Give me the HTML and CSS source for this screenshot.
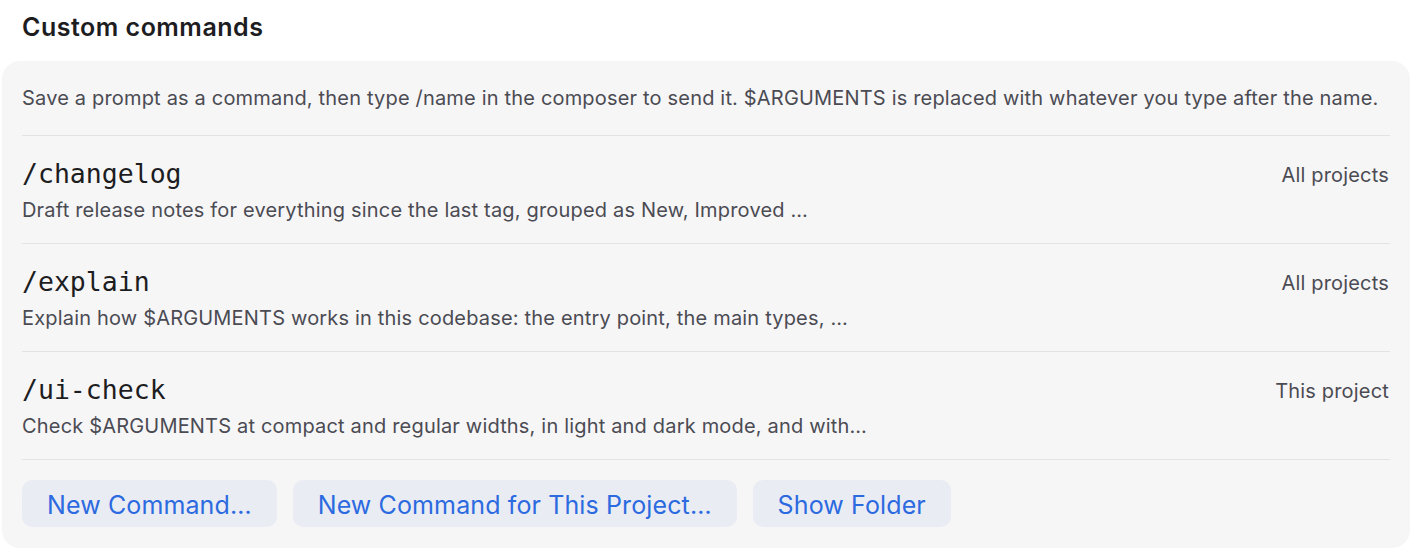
FILE: index.html
```html
<!DOCTYPE html>
<html lang="en">
<head>
<meta charset="utf-8">
<title>Custom commands</title>
<link rel="stylesheet" href="styles.css">
</head>
<body>
<div class="page">
  <h2 class="title">Custom commands</h2>
  <section class="panel">
    <p class="intro">Save a prompt as a command, then type /name in the composer to send it. $ARGUMENTS is replaced with whatever you type after the name.</p>
    <div class="row">
      <div class="row-main">
        <div class="cmd">/changelog</div>
        <div class="desc">Draft release notes for everything since the last tag, grouped as New, Improved …</div>
      </div>
      <div class="scope">All projects</div>
    </div>
    <div class="row">
      <div class="row-main">
        <div class="cmd">/explain</div>
        <div class="desc">Explain how $ARGUMENTS works in this codebase: the entry point, the main types, …</div>
      </div>
      <div class="scope">All projects</div>
    </div>
    <div class="row">
      <div class="row-main">
        <div class="cmd">/ui-check</div>
        <div class="desc">Check $ARGUMENTS at compact and regular widths, in light and dark mode, and with…</div>
      </div>
      <div class="scope">This project</div>
    </div>
    <div class="actions">
      <button class="btn">New Command…</button>
      <button class="btn">New Command for This Project…</button>
      <button class="btn">Show Folder</button>
    </div>
  </section>
</div>
</body>
</html>
```

FILE: styles.css
```css
html, body {
  margin: 0;
  padding: 0;
  background: #ffffff;
}

body {
  font-family: Inter, "Noto Sans", "Liberation Sans", sans-serif;
  color: #4b4b53;
}

.page {
  padding: 0 4px 4px 2px;
}

.title {
  margin: 0;
  padding: 12px 0 0 20px;
  height: 61px;
  box-sizing: border-box;
  font-size: 25px;
  line-height: 30px;
  font-weight: 600;
  letter-spacing: 0.5px;
  color: #1d1d1f;
}

.panel {
  background: #f6f6f7;
  border-radius: 18px;
  padding: 0 20px;
}

.intro {
  margin: 0;
  padding: 25px 0 25px 0;
  font-size: 20px;
  line-height: 24px;
  letter-spacing: 0.18px;
  border-bottom: 1px solid #e3e3e6;
}

.row {
  display: flex;
  justify-content: space-between;
  align-items: flex-start;
  padding: 22px 0 21px 0;
  border-bottom: 1px solid #e3e3e6;
}

.row-main {
  display: flex;
  flex-direction: column;
  gap: 8px;
}

.cmd {
  font-family: "DejaVu Sans Mono", "Liberation Mono", monospace;
  font-size: 26.5px;
  line-height: 32px;
  color: #1d1d1f;
}

.desc {
  font-size: 20px;
  line-height: 24px;
  letter-spacing: 0.18px;
}

.scope {
  font-size: 20px;
  line-height: 32px;
  letter-spacing: 0.18px;
  padding-top: 1px;
  padding-right: 1px;
}

.actions {
  display: flex;
  gap: 16px;
  padding: 20px 0 21px 0;
}

.btn {
  font-family: Inter, "Noto Sans", "Liberation Sans", sans-serif;
  font-size: 25px;
  line-height: 43px;
  height: 47px;
  padding: 4px 25px 0 25px;
  letter-spacing: 0.12px;
  border: none;
  border-radius: 10px;
  background: #eaecf4;
  color: #2c6ae0;
}
```
